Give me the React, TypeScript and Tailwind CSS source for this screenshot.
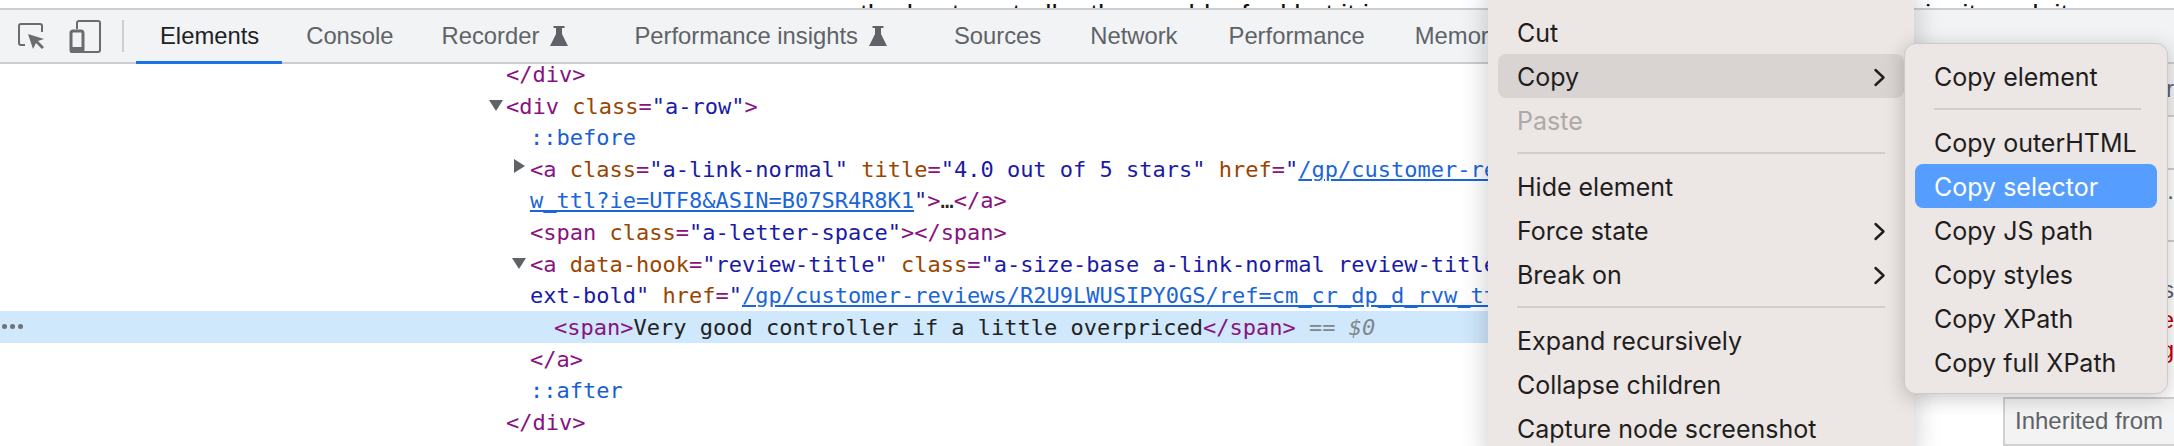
import React from 'react'

const Flask = () => (
  <svg width="20" height="20" viewBox="0 0 20 20" className="ml-[10px] text-[#5f6368]" fill="currentColor">
    <path d="M4.500 0h11v2H13v6l6 12H1L7 8V2H4.500z" />
  </svg>
)

const Chevron = () => (
  <svg width="13" height="19" viewBox="0 0 13 19" fill="none" stroke="#1f1e1e" strokeWidth="2.4" strokeLinecap="round" strokeLinejoin="round">
    <path d="M2.500 2l8 7.500-8 7.500" />
  </svg>
)

const Tag = ({ children }: { children: React.ReactNode }) => <span className="text-[#881280]">{children}</span>
const Attr = ({ children }: { children: React.ReactNode }) => <span className="text-[#994500]">{children}</span>
const Val = ({ children }: { children: React.ReactNode }) => <span className="text-[#1a1aa6]">{children}</span>
const Link = ({ children }: { children: React.ReactNode }) => <span className="text-[#1a66d8] underline">{children}</span>
const Pseudo = ({ children }: { children: React.ReactNode }) => <span className="text-[#1a5fd0]">{children}</span>

const Row = ({ pad, children }: { pad: string; children: React.ReactNode }) => (
  <div className={`h-[31.6px] leading-[33px] whitespace-pre ${pad}`}>{children}</div>
)

const Down = ({ left }: { left: string }) => (
  <span className={`absolute ${left} w-0 h-0 mt-[10px] border-x-[7px] border-x-transparent border-t-[11px] border-t-[#5f6368]`} />
)

const MenuItem = ({ label, sub, active, disabled }: { label: string; sub?: boolean; active?: boolean; disabled?: boolean }) => (
  <div className={`h-11 pt-[3px] flex items-center justify-between pl-[19px] pr-[18px] rounded-lg ${active ? 'bg-[#d9d4d2]' : ''} ${disabled ? 'text-[#aeaaa8]' : ''}`}>
    <span>{label}</span>
    {sub && <Chevron />}
  </div>
)

const Sep = ({ w }: { w: string }) => (
  <div className="h-[22px] flex items-center pl-[19px]">
    <div className={`h-[2px] bg-[#d3cecc] ${w}`} />
  </div>
)

export default function App() {
  return (
    <div className="relative w-[2174px] h-[446px] overflow-hidden bg-white font-['Liberation_Sans',sans-serif]">
      {/* page text above devtools */}
      <div className="h-2 overflow-hidden relative text-[28px] leading-[30px] text-[#111] whitespace-pre">
        <span className="absolute left-[860px] top-0">the best controller the would a feel but it is</span>
        <span className="absolute left-[1925px] top-0">in  it  and  it  o</span>
      </div>

      {/* toolbar */}
      <div className="relative z-10 h-[56px] bg-[#f1f3f4] border-y-2 border-[#cbcdd1] flex items-center text-[23.8px] text-[#5f6368]">
        <svg width="28" height="28" viewBox="0 0 28 28" className="ml-[17px] shrink-0" fill="none">
          <path d="M8 23H4a2 2 0 0 1-2-2V4a2 2 0 0 1 2-2h19a2 2 0 0 1 2 2v6" stroke="#6a6d70" strokeWidth="2" />
          <path d="M11 12l16 5-6 2 6 6-2 2-6-6-3 6z" fill="#6a6d70" />
        </svg>
        <svg width="32" height="34" viewBox="0 0 32 34" className="ml-[24px] shrink-0" fill="none">
          <path d="M8 10V4a2 2 0 0 1 2-2h19a2 2 0 0 1 2 2v27a2 2 0 0 1-2 2H10" stroke="#6a6d70" strokeWidth="2" />
          <rect x="2" y="12" width="12" height="21" rx="2" stroke="#6a6d70" strokeWidth="3" />
          <rect x="2" y="28" width="12" height="5" fill="#6a6d70" />
        </svg>
        <div className="ml-[21px] w-[2px] h-8 bg-[#cdcfd2] shrink-0" />
        <div className="ml-[12px] flex items-center h-full whitespace-nowrap">
          <div className="relative h-full flex items-center pl-6 pr-[23px] text-[#202124]">
            Elements
            <span className="absolute left-0 right-0 -bottom-[2px] h-[3px] bg-[#1a73e8]" />
          </div>
          <div className="px-6">Console</div>
          <div className="pl-6 pr-[41px] flex items-center">Recorder<Flask /></div>
          <div className="pl-6 pr-[42px] flex items-center">Performance insights<Flask /></div>
          <div className="px-6">Sources</div>
          <div className="pl-[25px] pr-[27px]">Network</div>
          <div className="pl-6 pr-[26px]">Performance</div>
          <div className="px-6">Memory</div>
        </div>
      </div>

      {/* elements tree */}
      <div className="relative -mt-[6px] z-20 text-[22px] font-['DejaVu_Sans_Mono',monospace] text-[#222]">
        <Row pad="pl-[506px]"><Tag>{'</div>'}</Tag></Row>
        <Row pad="pl-[506px]">
          <Down left="left-[489px]" />
          <Tag>{'<div '}</Tag><Attr>class</Attr><Tag>=</Tag><Val>"a-row"</Val><Tag>{'>'}</Tag>
        </Row>
        <Row pad="pl-[530px]"><Pseudo>::before</Pseudo></Row>
        <Row pad="pl-[530px]">
          <span className="absolute left-[514px] mt-[6px] w-0 h-0 border-y-[7px] border-y-transparent border-l-[11px] border-l-[#5f6368]" />
          <Tag>{'<a '}</Tag><Attr>class</Attr><Tag>=</Tag><Val>"a-link-normal"</Val>{' '}<Attr>title</Attr><Tag>=</Tag><Val>"4.0 out of 5 stars"</Val>{' '}<Attr>href</Attr><Tag>=</Tag><Val>"</Val><Link>/gp/customer-reviews</Link>
        </Row>
        <Row pad="pl-[530px]"><Link>w_ttl?ie=UTF8&amp;ASIN=B07SR4R8K1</Link><Val>"</Val><Tag>{'>'}</Tag>…<Tag>{'</a>'}</Tag></Row>
        <Row pad="pl-[530px]"><Tag>{'<span '}</Tag><Attr>class</Attr><Tag>=</Tag><Val>"a-letter-space"</Val><Tag>{'></span>'}</Tag></Row>
        <Row pad="pl-[530px]">
          <Down left="left-[512px]" />
          <Tag>{'<a '}</Tag><Attr>data-hook</Attr><Tag>=</Tag><Val>"review-title"</Val>{' '}<Attr>class</Attr><Tag>=</Tag><Val>"a-size-base a-link-normal review-title</Val>
        </Row>
        <Row pad="pl-[530px]"><Val>ext-bold"</Val>{' '}<Attr>href</Attr><Tag>=</Tag><Val>"</Val><Link>/gp/customer-reviews/R2U9LWUSIPY0GS/ref=cm_cr_dp_d_rvw_ttl</Link></Row>
        <div className="relative h-8 leading-[33px] bg-[#cfe8fc] pl-[554px] whitespace-pre">
          <span className="absolute left-[2px] top-[13px] flex gap-[3px]">
            <i className="w-[5px] h-[5px] rounded-full bg-[#6e7276]" />
            <i className="w-[5px] h-[5px] rounded-full bg-[#6e7276]" />
            <i className="w-[5px] h-[5px] rounded-full bg-[#6e7276]" />
          </span>
          <Tag>{'<span>'}</Tag>Very good controller if a little overpriced<Tag>{'</span>'}</Tag><span className="text-[#80868b]"> == <em>$0</em></span>
        </div>
        <Row pad="pl-[530px]"><Tag>{'</a>'}</Tag></Row>
        <Row pad="pl-[530px]"><Pseudo>::after</Pseudo></Row>
        <Row pad="pl-[506px]"><Tag>{'</div>'}</Tag></Row>
        <Row pad="pl-[530px]"><Tag>{'<span '}</Tag><Attr>class</Attr><Tag>=</Tag><Val>"a-letter-space"</Val></Row>
      </div>

      {/* styles panel peeking out behind the menus */}
      <aside className="absolute z-20 left-[2003px] top-[64px] w-[171px] h-[382px] flex flex-col bg-white text-[24px] leading-[30px] text-right text-[#5f6368]">
        <div className="h-[53px] border-b-2 border-[#d0d0d0] bg-[#f3f3f3] pt-[10px]">r</div>
        <div className="h-[53px] border-b-2 border-[#d0d0d0]" />
        <div className="h-[72px] border-b-2 border-[#d0d0d0] pt-[6px]">.</div>
        <div className="h-[155px] pt-[33px] flex flex-col items-end">
          <span>s</span>
          <span className="text-[#c80000]">e</span>
          <span className="text-[#c80000]">g</span>
        </div>
        <div className="h-[49px] bg-[#f3f3f3] border-y-2 border-l-2 border-[#d0d0d0] pl-[10px] leading-[44px] text-left whitespace-nowrap overflow-hidden">
          Inherited from
        </div>
      </aside>

      {/* context menu */}
      <div className="absolute z-30 left-[1488px] -top-[10px] w-[426px] h-[470px] pt-[20px] px-[10px] bg-[#ece6e4] shadow-[0_0_26px_rgba(0,0,0,0.22)] text-[25px] text-[#1f1e1e] font-['Inter',sans-serif]">
        <MenuItem label="Cut" />
        <MenuItem label="Copy" sub active />
        <MenuItem label="Paste" disabled />
        <Sep w="w-[368px]" />
        <MenuItem label="Hide element" />
        <MenuItem label="Force state" sub />
        <MenuItem label="Break on" sub />
        <Sep w="w-[368px]" />
        <MenuItem label="Expand recursively" />
        <MenuItem label="Collapse children" />
        <MenuItem label="Capture node screenshot" />
      </div>

      {/* copy submenu */}
      <div className="absolute z-30 left-[1904px] top-[43px] w-[264px] h-[351px] pt-[10px] px-[10px] rounded-xl bg-[#ece6e4] border border-[#cfcac8] shadow-[0_4px_20px_rgba(0,0,0,0.22)] text-[25px] text-[#1f1e1e] font-['Inter',sans-serif]">
        <MenuItem label="Copy element" />
        <Sep w="w-[207px]" />
        <MenuItem label="Copy outerHTML" />
        <div className="h-11 pt-[3px] flex items-center pl-[19px] rounded-lg bg-[#559dff] text-white">Copy selector</div>
        <MenuItem label="Copy JS path" />
        <MenuItem label="Copy styles" />
        <MenuItem label="Copy XPath" />
        <MenuItem label="Copy full XPath" />
      </div>
    </div>
  )
}
